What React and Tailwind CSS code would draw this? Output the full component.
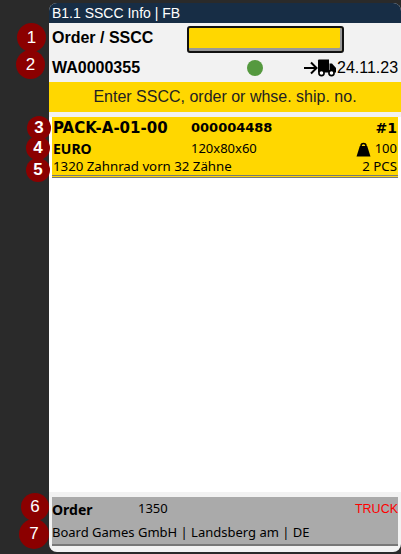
const Badge = ({ n, className }) => (
  <div className={`absolute rounded-full bg-[#8b0000] text-white flex items-center justify-center text-[17px] font-['Liberation_Sans',sans-serif] ${className}`}>
    {n}
  </div>
);

const TruckArrow = () => (
  <svg width="33" height="18" viewBox="1 0 33 18" className="shrink-0">
    <path d="M1 9h12M8 3.5l5.5 5.5-5.5 5.5" fill="none" stroke="#000" strokeWidth="2" />
    <path d="M15 1.5q0-1 1-1h10v13H15z" fill="#000" />
    <path d="M26.5 4.5h2.5l4 4.5v4.5h-6.5z" fill="#000" />
    <circle cx="18.5" cy="14" r="2.6" fill="#fff" stroke="#000" strokeWidth="1.6" />
    <circle cx="28.5" cy="14" r="2.6" fill="#fff" stroke="#000" strokeWidth="1.6" />
  </svg>
);

const Weight = () => (
  <svg width="15" height="16" viewBox="0 0 15 16" className="shrink-0">
    <path d="M5 5a2.5 2.5 0 1 1 5 0" fill="none" stroke="#000" strokeWidth="1.5" />
    <path d="M3.8 5h7.4L14.5 15.5H.5z" fill="#000" />
  </svg>
);

export default function App() {
  return (
    <div className="relative w-[401px] h-[554px] overflow-hidden bg-[#2a2a2a] pt-[3px] pl-[49px] font-['Liberation_Sans',sans-serif] text-black">
      <div className="h-[549px] flex flex-col bg-[#f2f2f2] rounded-[8px] overflow-hidden">
        <div className="h-[20px] shrink-0 bg-[#172d45] text-white text-[14px] leading-[20px] pl-[3px]">
          B1.1 SSCC Info | FB
        </div>

        <div className="h-[30px] shrink-0 flex items-center pl-[3px]">
          <span className="w-[135px] font-bold text-[16px]">Order / SSCC</span>
          <div className="w-[157px] h-[27px] self-start mt-[3px] rounded-[3px] border-2 border-[#111] bg-[#ffd700] shadow-[inset_-2px_-3px_0_#999]" />
        </div>

        <div className="h-[29px] shrink-0 flex items-center pl-[3px]">
          <span className="w-[195px] font-bold text-[16px]">WA0000355</span>
          <div className="w-[16px] h-[16px] rounded-full bg-[#55993f]" />
          <div className="ml-[41px] flex items-center">
            <TruckArrow />
            <span className="text-[16px]">24.11.23</span>
          </div>
        </div>

        <div className="h-[30px] shrink-0 bg-[#ffd700] text-center text-[16px] leading-[29px] text-[#222]">
          Enter SSCC, order or whse. ship. no.
        </div>

        <div className="flex-1 mt-[5px] bg-white">
          <div className="ml-[3px] mr-[3px] h-[61px] bg-[#ffd700] border-b-[3px] border-double border-[#777] font-['Noto_Sans',sans-serif] px-[1px]">
            <div className="h-[22px] flex items-center font-bold font-['DejaVu_Sans',sans-serif]">
              <span className="w-[138px] text-[15px]">PACK-A-01-00</span>
              <span className="text-[13px]">000004488</span>
              <span className="ml-auto text-[14px]">#1</span>
            </div>
            <div className="h-[19px] flex items-center text-[13px]">
              <span className="w-[138px] font-bold text-[14px]">EURO</span>
              <span>120x80x60</span>
              <span className="ml-auto flex items-center gap-[4px]">
                <Weight />
                100
              </span>
            </div>
            <div className="h-[17px] flex items-center justify-between text-[13.25px]">
              <span>1320 Zahnrad vorn 32 Zähne</span>
              <span>2 PCS</span>
            </div>
          </div>
        </div>

        <div className="shrink-0 mt-[5px] h-[49px] mb-[6px] ml-[3px] mr-[3px] bg-[#aaaaaa] font-['Noto_Sans',sans-serif] text-[13px] border-b-[2px] border-[#777]">
          <div className="h-[24px] flex items-center">
            <span className="w-[86px] font-bold text-[14px]">Order</span>
            <span>1350</span>
            <span className="ml-auto text-[#ff0000] font-['Liberation_Sans',sans-serif] text-[12.5px]">TRUCK</span>
          </div>
          <div className="h-[23px] flex items-center">Board Games GmbH | Landsberg am | DE</div>
        </div>
      </div>

      <Badge n="1" className="w-[29px] h-[29px] left-[17px] top-[23px]" />
      <Badge n="2" className="w-[29px] h-[29px] left-[16px] top-[50px]" />
      <Badge n="3" className="w-[24px] h-[24px] left-[27px] top-[116px] font-bold" />
      <Badge n="4" className="w-[24px] h-[24px] left-[26px] top-[136px] font-bold" />
      <Badge n="5" className="w-[24px] h-[24px] left-[26px] top-[158px] font-bold" />
      <Badge n="6" className="w-[28px] h-[28px] left-[21px] top-[493px]" />
      <Badge n="7" className="w-[30px] h-[30px] left-[19px] top-[519px]" />
    </div>
  );
}
